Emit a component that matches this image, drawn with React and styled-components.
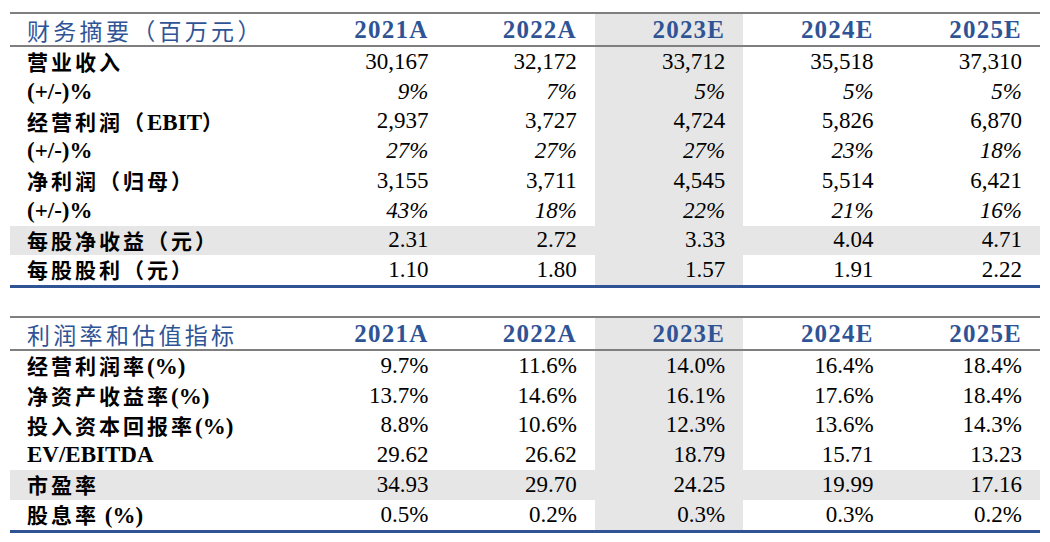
import React from "react";
import styled, { createGlobalStyle } from "styled-components";

const GlobalStyle = createGlobalStyle`
  body {
    margin: 0;
    background: #fff;
  }
`;

const YEARS = ["2021A", "2022A", "2023E", "2024E", "2025E"];
const SHADE_COL = 2;

const summaryRows = [
  { label: "营业收入", values: ["30,167", "32,172", "33,712", "35,518", "37,310"] },
  { label: "(+/-)%", values: ["9%", "7%", "5%", "5%", "5%"], italic: true },
  { label: "经营利润（EBIT）", values: ["2,937", "3,727", "4,724", "5,826", "6,870"] },
  { label: "(+/-)%", values: ["27%", "27%", "27%", "23%", "18%"], italic: true },
  { label: "净利润（归母）", values: ["3,155", "3,711", "4,545", "5,514", "6,421"] },
  { label: "(+/-)%", values: ["43%", "18%", "22%", "21%", "16%"], italic: true },
  { label: "每股净收益（元）", values: ["2.31", "2.72", "3.33", "4.04", "4.71"], shaded: true },
  { label: "每股股利（元）", values: ["1.10", "1.80", "1.57", "1.91", "2.22"] },
];

const ratioRows = [
  { label: "经营利润率(%)", values: ["9.7%", "11.6%", "14.0%", "16.4%", "18.4%"] },
  { label: "净资产收益率(%)", values: ["13.7%", "14.6%", "16.1%", "17.6%", "18.4%"] },
  { label: "投入资本回报率(%)", values: ["8.8%", "10.6%", "12.3%", "13.6%", "14.3%"] },
  { label: "EV/EBITDA", values: ["29.62", "26.62", "18.79", "15.71", "13.23"] },
  { label: "市盈率", values: ["34.93", "29.70", "24.25", "19.99", "17.16"], shaded: true },
  { label: "股息率 (%)", values: ["0.5%", "0.2%", "0.3%", "0.3%", "0.2%"] },
];

const Page = styled.div`
  padding: 12px 10px 0 10px;
  width: 1030px;
  display: flex;
  flex-direction: column;
  gap: 28px;
`;

const Table = styled.div`
  display: grid;
  grid-template-columns: 288px repeat(5, 1fr);
  border-top: 2px solid #7f7f7f;
  border-bottom: 3px solid #2f5496;
`;

const HeadCell = styled.div`
  height: 31px;
  display: flex;
  align-items: center;
  justify-content: ${(p) => (p.$label ? "flex-start" : "flex-end")};
  padding: ${(p) => (p.$label ? "0 0 0 17px" : "0 18px 0 0")};
  border-bottom: 2px solid #7f7f7f;
  background: ${(p) => (p.$shade ? "#e7e6e6" : "transparent")};
  color: #2f5496;
  font-family: ${(p) =>
    p.$label
      ? '"Noto Sans CJK SC", sans-serif'
      : '"Liberation Serif", serif'};
  font-size: ${(p) => (p.$label ? "23px" : "25px")};
  font-weight: ${(p) => (p.$label ? 400 : 700)};
  letter-spacing: ${(p) => (p.$label ? "3.3px" : "1.2px")};
  white-space: nowrap;
`;

const LabelCell = styled.div`
  height: 29.75px;
  line-height: 29.75px;
  padding-left: 17px;
  background: ${(p) => (p.$shade ? "#e7e6e6" : "transparent")};
  color: #000;
  font-family: "Liberation Serif", "Noto Sans CJK SC", serif;
  font-size: 23px;
  font-weight: 700;
  white-space: pre;
`;

// CJK runs in a label are set a touch smaller and spaced out
const Han = styled.span`
  font-family: "Noto Sans CJK SC", sans-serif;
  font-size: 21px;
  font-weight: 600;
  letter-spacing: 3px;
`;

const ValueCell = styled.div`
  height: 29.75px;
  display: flex;
  align-items: center;
  justify-content: flex-end;
  padding-right: 18px;
  background: ${(p) => (p.$shade ? "#e7e6e6" : "transparent")};
  color: #000;
  font-family: "Liberation Serif", serif;
  font-size: 23px;
  font-style: ${(p) => (p.$italic ? "italic" : "normal")};
  white-space: nowrap;
`;

const HAN_RUN = /([\u3000-\u9fff\uff00-\uffef]+)/;

const splitLabel = (text) =>
  text
    .split(HAN_RUN)
    .filter(Boolean)
    .map((part, i) =>
      HAN_RUN.test(part) ? <Han key={i}>{part}</Han> : part
    );

const FinTable = ({ title, rows }) => (
  <Table>
    <HeadCell $label>{title}</HeadCell>
    {YEARS.map((y, i) => (
      <HeadCell key={y} $shade={i === SHADE_COL}>
        {y}
      </HeadCell>
    ))}
    {rows.map((row, r) => (
      <React.Fragment key={r}>
        <LabelCell $shade={row.shaded}>{splitLabel(row.label)}</LabelCell>
        {row.values.map((v, i) => (
          <ValueCell
            key={i}
            $shade={row.shaded || i === SHADE_COL}
            $italic={row.italic}
          >
            {v}
          </ValueCell>
        ))}
      </React.Fragment>
    ))}
  </Table>
);

const App = () => (
  <>
    <GlobalStyle />
    <Page>
      <FinTable title="财务摘要（百万元）" rows={summaryRows} />
      <FinTable title="利润率和估值指标" rows={ratioRows} />
    </Page>
  </>
);

export default App;
